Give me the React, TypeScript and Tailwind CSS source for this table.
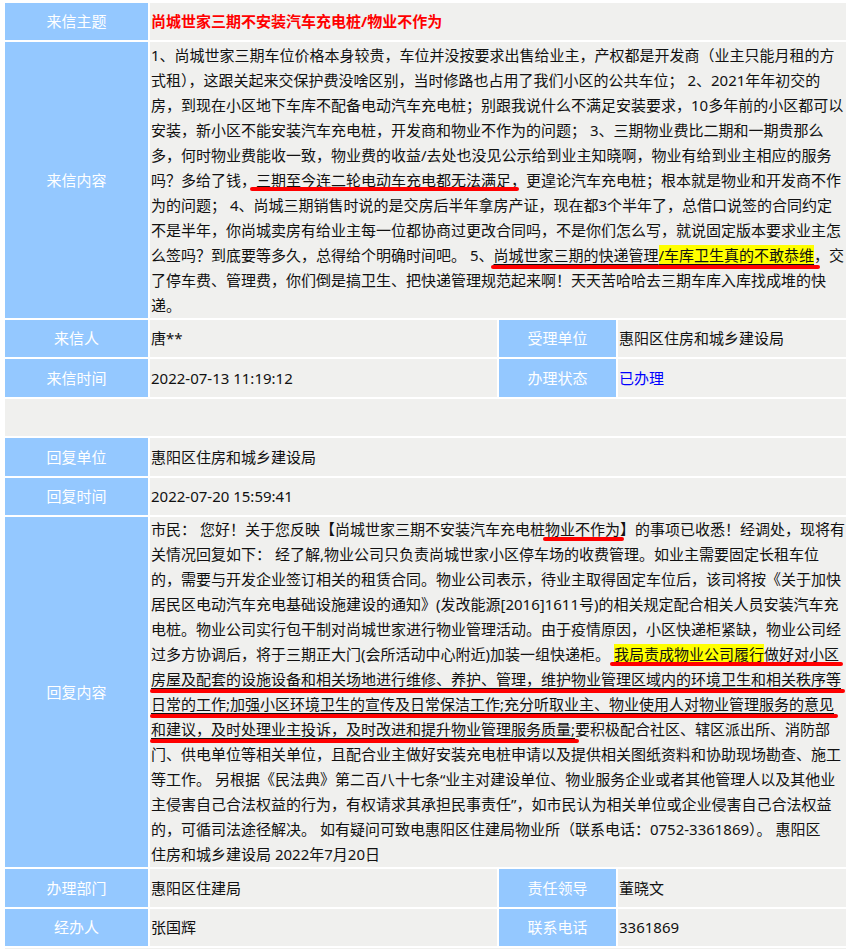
import React from "react";

const FONT = "font-['Noto_Sans','Noto_Sans_CJK_SC',sans-serif]";

function Label({ children }: { children?: React.ReactNode }) {
  return (
    <div className="bg-[#94c8ff] text-white flex items-center justify-center">
      {children}
    </div>
  );
}

function Val({ children, className = "" }: { children?: React.ReactNode; className?: string }) {
  return (
    <div className={`bg-[#f0f0ee] flex items-center pl-[1px] whitespace-nowrap ${className}`}>
      {children}
    </div>
  );
}

function Line({ children }: { children?: React.ReactNode }) {
  return <div className="h-[25px] leading-[25px] whitespace-nowrap">{children}</div>;
}

function Mark({
  children,
  bar,
  thin = true,
}: {
  children?: React.ReactNode;
  bar: string;
  thin?: boolean;
}) {
  return (
    <span className="relative inline-block h-[25px] align-top">
      <span className={thin ? "underline decoration-1 underline-offset-[3px]" : ""}>{children}</span>
      <span className={`absolute h-[4px] rounded-full bg-[#ff0000] ${bar}`} />
    </span>
  );
}

function Hl({ children }: { children?: React.ReactNode }) {
  return <span className="bg-[#ffff00]">{children}</span>;
}

export default function App() {
  return (
    <div className={`bg-white min-h-screen pl-[5px] pt-[3px] text-[15px] text-[#111] ${FONT}`}>
      <div className="w-[841px] flex flex-col gap-[2px]">
        {/* 来信主题 */}
        <div className="grid grid-cols-[143px_696px] gap-[2px] h-[37px]">
          <Label>来信主题</Label>
          <Val className="font-bold text-[#ff0000]">尚城世家三期不安装汽车充电桩/物业不作为</Val>
        </div>

        {/* 来信内容 */}
        <div className="grid grid-cols-[143px_696px] gap-[2px] h-[276px]">
          <Label>来信内容</Label>
          <div className="bg-[#f0f0ee] pl-[1px] pt-[1px]">
            <Line>1、尚城世家三期车位价格本身较贵，车位并没按要求出售给业主，产权都是开发商（业主只能月租的方</Line>
            <Line>式租），这跟关起来交保护费没啥区别，当时修路也占用了我们小区的公共车位； 2、2021年年初交的</Line>
            <Line>房，到现在小区地下车库不配备电动汽车充电桩；别跟我说什么不满足安装要求，10多年前的小区都可以</Line>
            <Line>安装，新小区不能安装汽车充电桩，开发商和物业不作为的问题； 3、三期物业费比二期和一期贵那么</Line>
            <Line>多，何时物业费能收一致，物业费的收益/去处也没见公示给到业主知晓啊，物业有给到业主相应的服务</Line>
            <Line>
              吗？多给了钱，
              <Mark bar="left-[-6px] right-[-8px] bottom-[2px]">三期至今连二轮电动车充电都无法满足</Mark>
              ，更遑论汽车充电桩；根本就是物业和开发商不作
            </Line>
            <Line>为的问题； 4、尚城三期销售时说的是交房后半年拿房产证，现在都3个半年了，总借口说签的合同约定</Line>
            <Line>不是半年，你尚城卖房有给业主每一位都协商过更改合同吗，不是你们怎么写，就说固定版本要求业主怎</Line>
            <Line>
              么签吗？到底要等多久，总得给个明确时间吧。 5、
              <Mark bar="left-[-2px] right-[-6px] bottom-[-1px]">
                尚城世家三期的快递管理<Hl>/车库卫生真的不敢恭维</Hl>
              </Mark>
              ，交
            </Line>
            <Line>了停车费、管理费，你们倒是搞卫生、把快递管理规范起来啊！天天苦哈哈去三期车库入库找成堆的快</Line>
            <Line>递。</Line>
          </div>
        </div>

        {/* 来信人 */}
        <div className="grid grid-cols-[143px_347px_117px_228px] gap-[2px] h-[37px]">
          <Label>来信人</Label>
          <Val>唐**</Val>
          <Label>受理单位</Label>
          <Val>惠阳区住房和城乡建设局</Val>
        </div>

        {/* 来信时间 */}
        <div className="grid grid-cols-[143px_347px_117px_228px] gap-[2px] h-[38px]">
          <Label>来信时间</Label>
          <Val>2022-07-13 11:19:12</Val>
          <Label>办理状态</Label>
          <Val className="text-[#0000ff]">已办理</Val>
        </div>

        {/* 空行 */}
        <div className="h-[37px] bg-[#f0f0ee]" />

        {/* 回复单位 */}
        <div className="grid grid-cols-[143px_696px] gap-[2px] h-[38px]">
          <Label>回复单位</Label>
          <Val>惠阳区住房和城乡建设局</Val>
        </div>

        {/* 回复时间 */}
        <div className="grid grid-cols-[143px_696px] gap-[2px] h-[37px]">
          <Label>回复时间</Label>
          <Val>2022-07-20 15:59:41</Val>
        </div>

        {/* 回复内容 */}
        <div className="grid grid-cols-[143px_696px] gap-[2px] h-[350px]">
          <Label>回复内容</Label>
          <div className="bg-[#f0f0ee] pl-[1px]">
            <Line>
              市民： 您好！关于您反映【尚城世家三期不安装汽车充电桩
              <Mark thin={false} bar="left-[-2px] right-[-4px] bottom-[1px]">物业不作为</Mark>
              】的事项已收悉！经调处，现将有
            </Line>
            <Line>关情况回复如下： 经了解,物业公司只负责尚城世家小区停车场的收费管理。如业主需要固定长租车位</Line>
            <Line>的，需要与开发企业签订相关的租赁合同。物业公司表示，待业主取得固定车位后，该司将按《关于加快</Line>
            <Line>居民区电动汽车充电基础设施建设的通知》(发改能源[2016]1611号)的相关规定配合相关人员安装汽车充</Line>
            <Line>电桩。物业公司实行包干制对尚城世家进行物业管理活动。由于疫情原因，小区快递柜紧缺，物业公司经</Line>
            <Line>
              过多方协调后，将于三期正大门(会所活动中心附近)加装一组快递柜。{" "}
              <Mark bar="left-[-4px] right-[-4px] bottom-[1px]">
                <Hl>我局责成物业公司履行</Hl>做好对小区
              </Mark>
            </Line>
            <Line>
              <Mark bar="left-[-1px] right-[-4px] bottom-[-1px]">
                房屋及配套的设施设备和相关场地进行维修、养护、管理，维护物业管理区域内的环境卫生和相关秩序等
              </Mark>
            </Line>
            <Line>
              <Mark bar="left-[-1px] right-[-4px] bottom-[-1px]">
                日常的工作;加强小区环境卫生的宣传及日常保洁工作;充分听取业主、物业使用人对物业管理服务的意见
              </Mark>
            </Line>
            <Line>
              <Mark bar="left-[-1px] right-[-4px] bottom-[-1px]">
                和建议，及时处理业主投诉，及时改进和提升物业管理服务质量;
              </Mark>
              要积极配合社区、辖区派出所、消防部
            </Line>
            <Line>门、供电单位等相关单位，且配合业主做好安装充电桩申请以及提供相关图纸资料和协助现场勘查、施工</Line>
            <Line>等工作。 另根据《民法典》第二百八十七条“业主对建设单位、物业服务企业或者其他管理人以及其他业</Line>
            <Line>主侵害自己合法权益的行为，有权请求其承担民事责任”，如市民认为相关单位或企业侵害自己合法权益</Line>
            <Line>的，可循司法途径解决。 如有疑问可致电惠阳区住建局物业所（联系电话：0752-3361869）。 惠阳区</Line>
            <Line>住房和城乡建设局 2022年7月20日</Line>
          </div>
        </div>

        {/* 办理部门 */}
        <div className="grid grid-cols-[143px_347px_117px_228px] gap-[2px] h-[38px]">
          <Label>办理部门</Label>
          <Val>惠阳区住建局</Val>
          <Label>责任领导</Label>
          <Val>董晓文</Val>
        </div>

        {/* 经办人 */}
        <div className="grid grid-cols-[143px_347px_117px_228px] gap-[2px] h-[37px]">
          <Label>经办人</Label>
          <Val>张国辉</Val>
          <Label>联系电话</Label>
          <Val>3361869</Val>
        </div>

        <div className="h-[37px] bg-[#f0f0ee]" />
      </div>
    </div>
  );
}
